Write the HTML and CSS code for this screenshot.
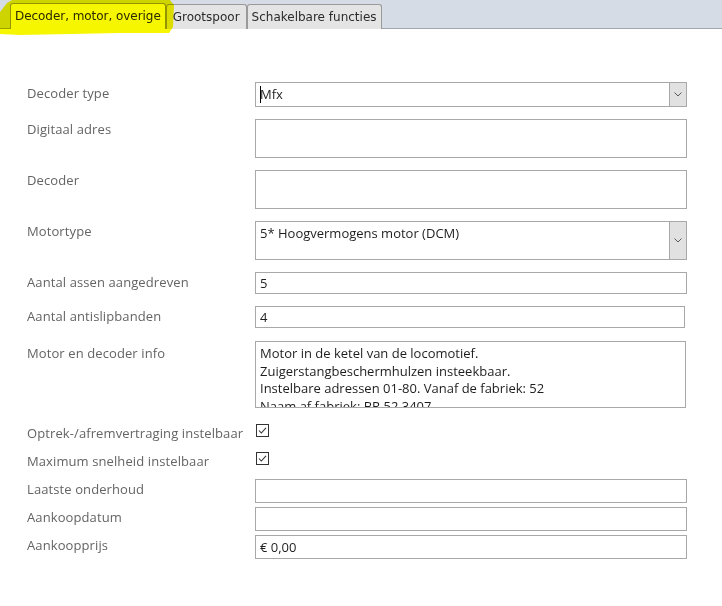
FILE: index.html
```html
<!DOCTYPE html>
<html lang="nl">
<head>
<meta charset="utf-8">
<title>Decoder, motor, overige</title>
<link rel="stylesheet" href="styles.css">
</head>
<body>
<div class="tabbar">
  <div class="tab active">Decoder, motor, overige</div>
  <div class="tab wide">Grootspoor</div>
  <div class="tab">Schakelbare functies</div>
  <svg class="marker" width="180" height="38" viewBox="0 0 180 38"><polygon points="0,12 7,3 12,0 170,0 174,5 173,27 169,33 120,33 20,35 0,34" fill="#f6f600"/></svg>
</div>
<div class="form">
  <div class="row r-select">
    <div class="label">Decoder type</div>
    <div class="field select h25"><span class="val"><span class="caret"></span>Mfx</span><span class="btn"><svg width="8" height="5" viewBox="0 0 8 5"><polyline points="0.5,0.5 4,4 7.5,0.5" fill="none" stroke="#5a5a5a" stroke-width="1"/></svg></span></div>
  </div>
  <div class="row g12">
    <div class="label">Digitaal adres</div>
    <div class="field h39"></div>
  </div>
  <div class="row g12">
    <div class="label">Decoder</div>
    <div class="field h39"></div>
  </div>
  <div class="row g12">
    <div class="label">Motortype</div>
    <div class="field select h39 top"><span class="val">5* Hoogvermogens motor (DCM)</span><span class="btn"><svg width="8" height="5" viewBox="0 0 8 5"><polyline points="0.5,0.5 4,4 7.5,0.5" fill="none" stroke="#5a5a5a" stroke-width="1"/></svg></span></div>
  </div>
  <div class="row g12">
    <div class="label">Aantal assen aangedreven</div>
    <div class="field h22"><span class="val">5</span></div>
  </div>
  <div class="row g12">
    <div class="label">Aantal antislipbanden</div>
    <div class="field h22 narrow"><span class="val">4</span></div>
  </div>
  <div class="row g13">
    <div class="label l-memo">Motor en decoder info</div>
    <div class="field memo">
      <div class="line">Motor in de ketel van de locomotief.</div>
      <div class="line">Zuigerstangbeschermhulzen insteekbaar.</div>
      <div class="line">Instelbare adressen 01-80. Vanaf de fabriek: 52</div>
      <div class="line">Naam af fabriek: BR 52 3407</div>
    </div>
  </div>
  <div class="row chk first">
    <div class="label">Optrek-/afremvertraging instelbaar</div>
    <div class="check"><svg width="13" height="13" viewBox="0 0 13 13"><rect x="0.5" y="0.5" width="12" height="12" fill="#fff" stroke="#333"/><polyline points="3,6.5 5.3,9 10,3.8" fill="none" stroke="#333" stroke-width="1.1"/></svg></div>
  </div>
  <div class="row chk second">
    <div class="label">Maximum snelheid instelbaar</div>
    <div class="check"><svg width="13" height="13" viewBox="0 0 13 13"><rect x="0.5" y="0.5" width="12" height="12" fill="#fff" stroke="#333"/><polyline points="3,6.5 5.3,9 10,3.8" fill="none" stroke="#333" stroke-width="1.1"/></svg></div>
  </div>
  <div class="row after-chk">
    <div class="label">Laatste onderhoud</div>
    <div class="field h24"></div>
  </div>
  <div class="row g4">
    <div class="label">Aankoopdatum</div>
    <div class="field h24"></div>
  </div>
  <div class="row g4">
    <div class="label">Aankoopprijs</div>
    <div class="field h24"><span class="val">€ 0,00</span></div>
  </div>
</div>
</body>
</html>
```
FILE: styles.css
```css
html, body {
  margin: 0;
  padding: 0;
  background: #ffffff;
}
body {
  width: 722px;
  height: 606px;
  overflow: hidden;
  font-family: "Open Sans", "Noto Sans", sans-serif;
}
.tabbar {
  position: relative;
  height: 28px;
  background: #d6dce6;
  border-bottom: 1px solid #9fa6ae;
  display: flex;
  align-items: flex-end;
  padding-left: 10px;
}
.tab {
  height: 25px;
  box-sizing: border-box;
  padding: 0 4px;
  border: 1px solid #9a9a9a;
  border-bottom: none;
  border-radius: 3px 3px 0 0;
  background: #e4e4e4;
  font-family: "DejaVu Sans", sans-serif;
  font-size: 12px;
  line-height: 25px;
  color: #2b2b2b;
  margin-bottom: -1px;
}
.tab.wide { padding: 0 6px; }
.tab.active {
  background: #ffffff;
  height: 26px;
  position: relative;
  z-index: 1;
  letter-spacing: -0.05px;
}
.marker {
  position: absolute;
  left: 0;
  top: 0;
  mix-blend-mode: multiply;
  z-index: 2;
  pointer-events: none;
}
.form {
  padding-left: 27px;
  padding-top: 53px;
}
.row {
  display: grid;
  grid-template-columns: 228px 432px;
  align-items: start;
}
.g12 { margin-top: 12px; }
.g13 { margin-top: 13px; }
.g4 { margin-top: 4px; }
.label {
  font-size: 13px;
  line-height: 20px;
  color: #646464;
  white-space: nowrap;
  margin-top: 0;
  letter-spacing: 0.1px;
}
.r-select .label { margin-top: 1px; }
.l-memo { margin-top: 2px; }
.field {
  box-sizing: border-box;
  border: 1px solid #a8a8a8;
  background: #fff;
  font-size: 13px;
  color: #1e1e1e;
  position: relative;
  display: flex;
  align-items: center;
}
.field .val {
  padding-left: 4px;
  flex: 1;
  white-space: nowrap;
}
.h25 { height: 25px; }
.h39 { height: 39px; }
.h22 { height: 22px; }
.h24 { height: 24px; }
.narrow { width: 430px; }
.field.top { align-items: stretch; }
.field.top .val { padding-top: 2px; line-height: 18px; }
.caret {
  display: inline-block;
  width: 0;
  height: 17px;
  border-left: 1px solid #000;
  vertical-align: middle;
  margin-right: -1px;
  position: relative;
  top: -1px;
}
.btn {
  align-self: stretch;
  width: 16px;
  background: #e1e1e1;
  border-left: 1px solid #a8a8a8;
  display: flex;
  align-items: center;
  justify-content: center;
}
.memo {
  height: 67px;
  width: 431px;
  display: block;
  overflow: hidden;
  padding: 3px 0 0 4px;
}
.memo .line {
  line-height: 17.5px;
  white-space: nowrap;
}
.chk.first { margin-top: 12px; }
.chk.second { margin-top: 5px; }
.chk .label { margin-top: 3px; }
.check {
  height: 20px;
  display: flex;
  align-items: center;
  padding-left: 1px;
}
.after-chk { margin-top: 8px; }
```
